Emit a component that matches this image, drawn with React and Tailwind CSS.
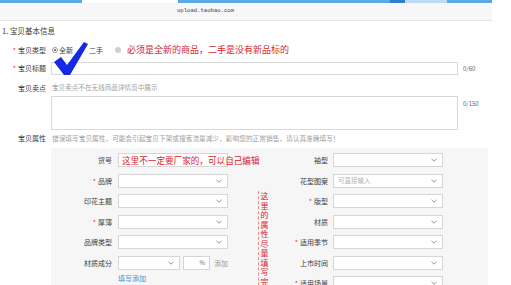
import React from "react";

const Chevron = () => (
  <svg width="6" height="4" viewBox="0 0 6 4" className="shrink-0">
    <path d="M0.5 0.8 L3 3.2 L5.5 0.8" fill="none" stroke="#777" strokeWidth="0.8" />
  </svg>
);

const Select = ({ width = "w-[110px]", placeholder }) => (
  <div className={`${width} h-[14px] bg-white border border-[#d6d6d6] flex items-center justify-between pl-[4px] pr-[5px]`}>
    <span className="text-[6.5px] text-[#b5b5b5]">{placeholder}</span>
    <Chevron />
  </div>
);

const Req = () => <span className="text-[#e4393c] mr-[2px]">*</span>;

const App = () => {
  const leftRows = [
    { label: "货号", input: true },
    { label: "品牌", req: true },
    { label: "印花主题" },
    { label: "厚薄", req: true },
    { label: "品牌类型" },
    { label: "材质成分", mix: true },
  ];

  const rightRows = [
    { label: "袖型" },
    { label: "花型图案", placeholder: "可直接输入" },
    { label: "版型", req: true },
    { label: "材质" },
    { label: "适用季节", req: true },
    { label: "上市时间" },
    { label: "适用场景", req: true },
  ];

  return (
    <div className="w-[511px] h-[285px] overflow-hidden bg-white font-['Noto_Sans_CJK_SC',sans-serif] text-[#3c3c3c] relative">
      {/* browser top */}
      <div className="flex h-[3px]">
        <div className="w-[82px] bg-[#5aa8e6]" />
        <div className="ml-[96px] w-[212px] bg-[#5aa8e6]" />
        <div className="w-[15px] bg-[#2f7fd0]" />
        <div className="w-[42px] bg-[#bcdcf4]" />
        <div className="w-[45px] bg-[#5aa8e6]" />
      </div>
      <div className="w-[492px] h-[18px] bg-[#f7f6f9] border-b border-[#e4e4e4] flex items-center pl-[177px]">
        <span className="font-['Liberation_Mono',monospace] text-[5.6px] text-[#444]">upload.taobao.com</span>
      </div>

      {/* title */}
      <div className="h-[20px] flex items-center pl-[2px] text-[7.5px]">1. 宝贝基本信息</div>

      {/* 宝贝类型 */}
      <div className="mt-[2px] h-[14px] flex items-center">
        <div className="w-[46px] text-right text-[7px]"><Req />宝贝类型</div>
        <div className="ml-[6px] flex items-center text-[7px]">
          <div className="w-[6px] h-[6px] rounded-full border border-[#999] flex items-center justify-center">
            <div className="w-[2px] h-[2px] rounded-full bg-[#555]" />
          </div>
          <span className="ml-[1px]">全新</span>
          <span className="ml-[16px]">二手</span>
          <div className="ml-[12px] w-[6px] h-[6px] rounded-full bg-[#cfcfcf]" />
          <span className="ml-[6px] text-[9px] text-[#d9232d] whitespace-nowrap">必须是全新的商品，二手是没有新品标的</span>
        </div>
      </div>

      {/* 宝贝标题 */}
      <div className="mt-[4px] h-[14px] flex items-center">
        <div className="w-[46px] text-right text-[7px]"><Req />宝贝标题</div>
        <div className="ml-[5px] w-[407px] h-[13px] border border-[#d9d9d9]" />
        <span className="ml-[5px] text-[6px] text-[#666]">0/60</span>
      </div>

      {/* 宝贝卖点 */}
      <div className="mt-[7px] h-[12px] flex items-center">
        <div className="w-[46px] text-right text-[7px]">宝贝卖点</div>
        <span className="ml-[6px] text-[6.6px] text-[#a0a0a0] whitespace-nowrap">宝贝卖点不在无线商品详情页中展示</span>
      </div>
      <div className="mt-[2px] h-[34px] flex items-start">
        <div className="ml-[51px] w-[407px] h-[34px] border border-[#d9d9d9]" />
        <span className="ml-[5px] mt-[3px] text-[6px] text-[#666]">0/150</span>
      </div>

      {/* 宝贝属性 */}
      <div className="mt-[2px] h-[12px] flex items-center">
        <div className="w-[46px] text-right text-[7px]">宝贝属性</div>
        <span className="ml-[6px] text-[6.7px] text-[#a0a0a0] whitespace-nowrap">错误填写宝贝属性，可能会引起宝贝下架或搜索流量减少，影响您的正常销售，请认真准确填写！</span>
      </div>

      {/* property panel */}
      <div className="mt-[4px] ml-[51px] w-[437px] h-[140px] bg-[#f6f6f6] pt-[2px] flex items-start">
        <div className="w-[177px] flex flex-col">
          {leftRows.map((r) => (
            <div key={r.label} className="h-[20.5px] flex items-center">
              <div className="w-[61px] text-right text-[7px]">{r.req && <Req />}{r.label}</div>
              <div className="ml-[6px]">
                {r.input ? (
                  <div className="w-[110px] h-[14px] bg-white border border-[#d6d6d6] flex items-center pl-[3px]">
                    <span className="text-[8.6px] text-[#d9232d] whitespace-nowrap relative z-10">这里不一定要厂家的，可以自己编辑</span>
                  </div>
                ) : r.mix ? (
                  <div className="flex items-center">
                    <Select width="w-[62px]" />
                    <div className="ml-[3px] w-[27px] h-[14px] bg-white border border-[#d6d6d6] flex items-center justify-end pr-[4px] text-[6px] text-[#666]">%</div>
                    <span className="ml-[4px] text-[7px] text-[#999]">添加</span>
                  </div>
                ) : (
                  <Select />
                )}
              </div>
            </div>
          ))}
          <div className="h-[10px] flex items-center pl-[67px] text-[7px] text-[#3a8fd6]">填写添加</div>
        </div>

        <div className="w-[40px] pl-[30px] pt-[41px]">
          <div className="border-l border-dashed border-[#e88] h-[110px] w-[11px] flex flex-col items-center pl-[1px] text-[8px] text-[#d9232d]">
            {"这里的属性尽量填写完整".split("").map((c, i) => (
              <span key={i} className="h-[9.5px] leading-[9.5px] block shrink-0">{c}</span>
            ))}
          </div>
        </div>

        <div className="flex flex-col">
          {rightRows.map((r) => (
            <div key={r.label} className="h-[20.5px] flex items-center">
              <div className="w-[60px] text-right text-[7px]">{r.req && <Req />}{r.label}</div>
              <div className="ml-[5px]">
                <Select placeholder={r.placeholder} />
              </div>
            </div>
          ))}
        </div>
      </div>

      {/* hand-drawn check mark */}
      <svg className="absolute left-[52px] top-[42px]" width="40" height="36" viewBox="0 0 40 36">
        <polygon points="2,20 9,15 15,23 32,0 36,2 18,33 12,33" fill="#1428e6" />
      </svg>
    </div>
  );
};

export default App;
